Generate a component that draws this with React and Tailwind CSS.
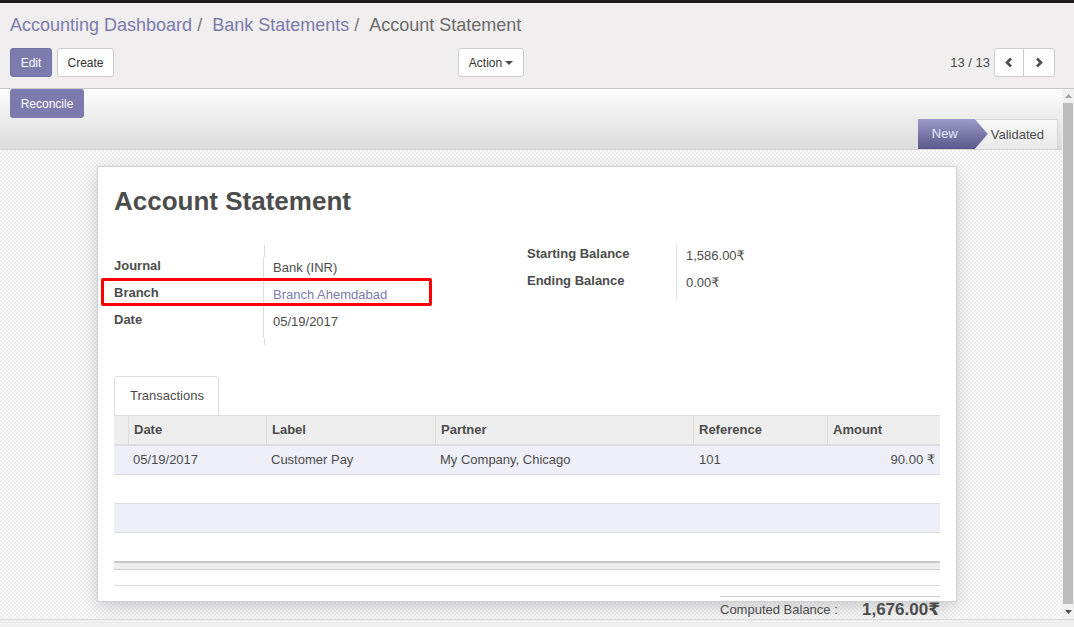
import React from "react";

const font = { fontFamily: '"Liberation Sans", Arial, "DejaVu Sans", sans-serif' };

function Chevron({ dir }) {
  return (
    <svg width="10" height="11" viewBox="0 0 10 11">
      {dir === "left" ? (
        <path d="M7 1.5 L3 5.5 L7 9.5" fill="none" stroke="#4c4c4c" strokeWidth="2.6" strokeLinejoin="miter" />
      ) : (
        <path d="M3 1.5 L7 5.5 L3 9.5" fill="none" stroke="#4c4c4c" strokeWidth="2.6" strokeLinejoin="miter" />
      )}
    </svg>
  );
}

function Caret() {
  return (
    <svg width="8" height="4" viewBox="0 0 8 4" className="ml-[3px]">
      <path d="M0 0 L8 0 L4 4 Z" fill="#4c4c4c" />
    </svg>
  );
}

function Scrollbar() {
  return (
    <div className="w-[12px] bg-[#f1f1f1] flex flex-col items-center">
      <div className="h-[14px] flex items-center justify-center">
        <svg width="7" height="4" viewBox="0 0 7 4"><path d="M0 4 L7 4 L3.5 0 Z" fill="#a3a3a3" /></svg>
      </div>
      <div className="flex-1 w-[10px] bg-[#bcbcbc] mb-[1px]" />
      <div className="h-[14px] flex items-center justify-center">
        <svg width="7" height="4" viewBox="0 0 7 4"><path d="M0 0 L7 0 L3.5 4 Z" fill="#505050" /></svg>
      </div>
    </div>
  );
}

function Field({ label, value, link }) {
  return (
    <div className="flex h-[27px]">
      <div className="w-[150px] pt-[1px] font-bold text-[#4c4c4c] leading-[15px] border-r border-[#ddd]">{label}</div>
      <div className={"pl-[9px] pt-[3px] leading-[15px] " + (link ? "text-[#7c7bad]" : "text-[#4c4c4c]")}>{value}</div>
    </div>
  );
}

export default function App() {
  const cols = "grid grid-cols-[14px_138px_169px_258px_134px_113px]";
  return (
    <div className="w-[1074px] h-[627px] overflow-hidden bg-[#f0eeee] text-[13px] text-[#4c4c4c]" style={font}>
      <div className="h-[3px] bg-[#1c1c1c]" />
      {/* control panel */}
      <div className="h-[86px] bg-[#f0eeee] border-b border-[#c8c8c8]">
        <div className="h-[43px] pt-[2px] flex items-center pl-[10px] text-[18px]">
          <span className="text-[#7c7bad]">Accounting Dashboard</span>
          <span className="text-[#777] ml-[5px] mr-[10px]">/</span>
          <span className="text-[#7c7bad]">Bank Statements</span>
          <span className="text-[#777] ml-[5px] mr-[10px]">/</span>
          <span className="text-[#6a6a6a]">Account Statement</span>
        </div>
        <div className="mt-[2px] h-[29px] flex items-stretch pl-[10px] pr-[19px] text-[12px]">
          <div className="w-[448px] flex gap-[5px]">
            <div className="w-[42px] flex items-center justify-center bg-[#7c7bad] text-white rounded-[3px] border border-[#7473a6]">Edit</div>
            <div className="w-[57px] flex items-center justify-center bg-white text-[#333] rounded-[3px] border border-[#ccc]">Create</div>
          </div>
          <div className="w-[66px] flex items-center justify-center bg-white text-[#333] rounded-[3px] border border-[#ccc]">
            Action<Caret />
          </div>
          <div className="flex-1" />
          <div className="flex items-center mr-[4px] text-[13px] text-[#4c4c4c]">13 / 13</div>
          <div className="flex bg-white rounded-[3px] border border-[#ccc]">
            <div className="w-[29px] flex items-center justify-center border-r border-[#ccc]"><Chevron dir="left" /></div>
            <div className="w-[30px] flex items-center justify-center"><Chevron dir="right" /></div>
          </div>
        </div>
      </div>
      <div className="flex h-[530px]">
        <div className="w-[1062px] flex flex-col">
          {/* statusbar */}
          <div className="h-[61px] bg-linear-to-b from-[#fdfdfd] to-[#dcdcdc] border-b border-[#cfcfcf] flex flex-col">
            <div className="h-[29px] pl-[10px] flex">
              <div className="w-[74px] flex items-center justify-center bg-[#7c7bad] text-white text-[12px] rounded-[3px]">Reconcile</div>
            </div>
            <div className="h-[31px] flex justify-end pr-[4px] pt-[1px]">
              <div className="relative z-10 w-[70px] -mr-[13px] h-[30px] flex items-center pl-[14px] text-[#e4e8ff] bg-linear-to-b from-[#9d9bc8] to-[#5a588c] [clip-path:polygon(0_0,57px_0,70px_50%,57px_100%,0_100%)]">
                New
              </div>
              <div className="h-[30px] flex items-center pl-[16px] pr-[13px] text-[#4c4c4c] bg-linear-to-b from-[#fafafa] to-[#e9e9e9] border-t border-r border-[#d5d5d5]">
                Validated
              </div>
            </div>
          </div>
          {/* sheet */}
          <div className="flex-1 overflow-hidden bg-[#f6f6f6] bg-[image:repeating-conic-gradient(#efefef_0_25%,#fbfbfb_0_50%)] bg-[length:4px_4px] pt-[16px]">
            <div className="relative ml-[97px] w-[860px] h-[436px] bg-white border border-[#cfcfd6] shadow-[0_5px_18px_rgba(0,0,0,0.18)] pl-[16px] pr-[16px]">
              <div className="pt-[19px] h-[49px] text-[26px] font-bold text-[#4c4c4c] leading-[30px]">Account Statement</div>
              <div className="mt-[29px] flex">
                <div className="w-[413px]">
                  <div className="h-[12px] ml-[150px] border-l border-[#ddd]" />
                  <Field label="Journal" value="Bank (INR)" />
                  <Field label="Branch" value="Branch Ahemdabad" link />
                  <Field label="Date" value="05/19/2017" />
                  <div className="h-[7px] ml-[150px] border-l border-[#ddd]" />
                </div>
                <div className="w-[412px]">
                  <div className="flex h-[27px]">
                    <div className="w-[150px] pt-[1px] font-bold leading-[15px] border-r border-[#ddd]">Starting Balance</div>
                    <div className="pl-[9px] pt-[3px] leading-[15px]">1,586.00₹</div>
                  </div>
                  <div className="flex h-[27px]">
                    <div className="w-[150px] pt-[1px] font-bold leading-[15px] border-r border-[#ddd]">Ending Balance</div>
                    <div className="pl-[9px] pt-[3px] leading-[15px]">0.00₹</div>
                  </div>
                </div>
              </div>
              {/* tabs */}
              <div className="mt-[31px] flex">
                <div className="w-[105px] h-[39px] border border-b-0 border-[#ddd] rounded-t-[4px] flex items-center pl-[15px] text-[#4c4c4c]">Transactions</div>
              </div>
              {/* table */}
              <div className="w-[826px]">
                <div className={cols + " h-[31px] bg-[#eeeeee] border-t border-[#dcdcdc] border-b-2 border-b-[#dcdcdc] font-bold"}>
                  <div />
                  <div className="border-l border-[#dcdcdc] pl-[5px] flex items-center">Date</div>
                  <div className="border-l border-[#dcdcdc] pl-[5px] flex items-center">Label</div>
                  <div className="border-l border-[#dcdcdc] pl-[5px] flex items-center">Partner</div>
                  <div className="border-l border-[#dcdcdc] pl-[5px] flex items-center">Reference</div>
                  <div className="border-l border-[#dcdcdc] pl-[5px] flex items-center">Amount</div>
                </div>
                <div className={cols + " h-[29px] bg-[#eeeff8] border-b border-[#dcdcdc]"}>
                  <div />
                  <div className="pl-[5px] flex items-center">05/19/2017</div>
                  <div className="pl-[5px] flex items-center">Customer Pay</div>
                  <div className="pl-[5px] flex items-center">My Company, Chicago</div>
                  <div className="pl-[6px] flex items-center">101</div>
                  <div className="pr-[5px] flex items-center justify-end">90.00 ₹</div>
                </div>
                <div className="h-[29px] bg-white border-b border-[#dcdcdc]" />
                <div className="h-[29px] bg-[#eeeff8] border-b border-[#dcdcdc]" />
                <div className="h-[28px] bg-white" />
                <div className="h-[9px] bg-[#eeeeee] border-t-2 border-[#c8c8c8] border-b border-b-[#cccccc]" />
                <div className="h-[16px] bg-white border-b border-[#dddddd]" />
                <div className="flex justify-end">
                  <div className="w-[220px] mt-[10px] border-t border-[#cccccc] flex items-center h-[26px]">
                    <span className="w-[144px] pt-[1px]">Computed Balance :</span>
                    <span className="flex-1 text-right text-[17px] font-bold leading-[22px] pt-[1px]">1,676.00₹</span>
                  </div>
                </div>
              </div>
              {/* annotation */}
              <div className="absolute left-[3px] top-[111px] w-[331px] h-[28px] border-[3px] border-[#ff0000] rounded-[2px] pointer-events-none" />
            </div>
          </div>
        </div>
        <Scrollbar />
      </div>
      <div className="h-[8px] bg-[#efefef] border-t border-[#d8d8d8]" />
    </div>
  );
}
